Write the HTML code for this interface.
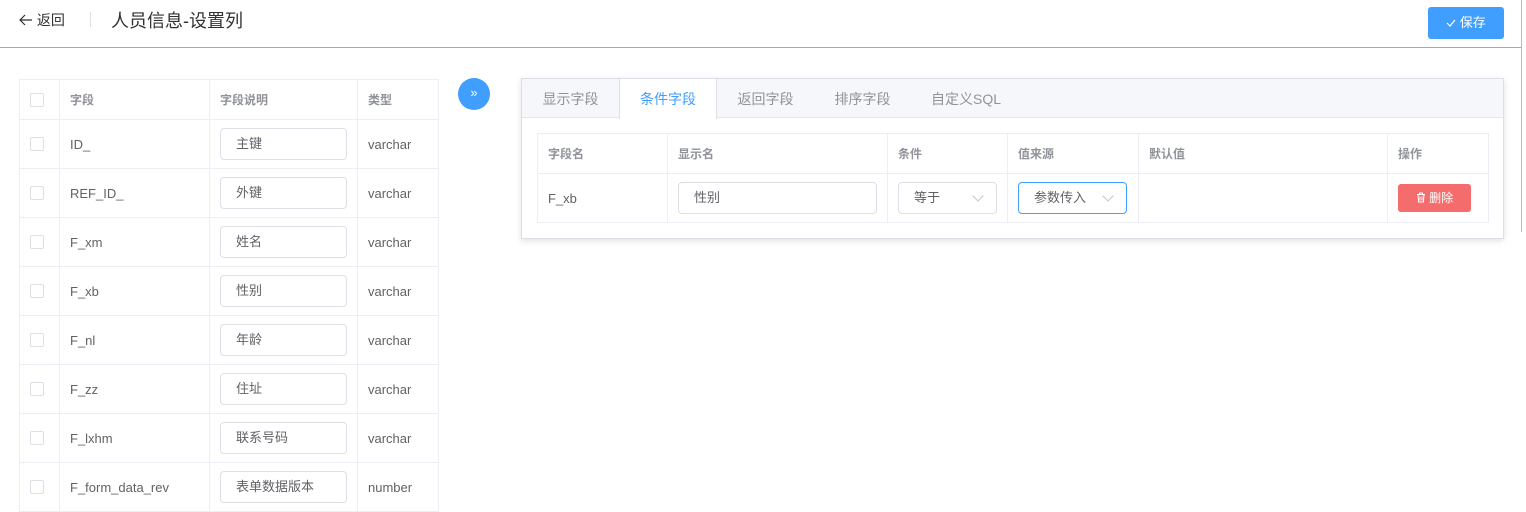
<!DOCTYPE html>
<html><head><meta charset="utf-8"><style>
*{box-sizing:border-box;margin:0;padding:0}
body{width:1526px;height:492px;overflow:hidden;background:#fff;font-family:"Liberation Sans","Noto Sans CJK SC",sans-serif;font-size:13px;color:#606266;position:relative}
.a{position:absolute}
.hdr{left:0;top:0;width:1522px;height:48px;border-bottom:1px solid #a8a8a8}
.vl{left:1521px;top:0;width:1px;height:232px;background:#bbb}
table{border-collapse:collapse;table-layout:fixed}
td{border:1px solid #ebeef5;padding:0 10px;vertical-align:middle}
.lt td{height:49px}
.lt tr:first-child td{height:40px;color:#909399;font-weight:bold;font-size:12px}
.cb{width:14px;height:14px;border:1px solid #dcdfe6;border-radius:2px;margin-left:0}
.inp{width:127px;height:32px;border:1px solid #dcdfe6;border-radius:4px;padding-left:15px;line-height:30px;color:#606266}
.panel{left:521px;top:78px;width:983px;height:161px;border:1px solid #dcdfe6;box-shadow:0 2px 6px rgba(0,0,0,.12);background:#fff}
.tabs{left:0;top:0;width:981px;height:39px;background:#f5f7fa;border-bottom:1px solid #e4e7ed}
.tab{position:absolute;top:0;height:39px;line-height:40px;text-align:center;font-size:14px;color:#909399}
.rt td{padding-left:10px}
.rt tr:first-child td{height:40px;color:#909399;font-weight:bold;font-size:12px}
.rt tr:last-child td{height:49px}
.sel{height:32px;border:1px solid #dcdfe6;border-radius:4px;padding-left:15px;line-height:30px;position:relative;color:#606266}
.sel:after{content:"";position:absolute;right:14px;top:9px;width:7px;height:7px;border-right:1px solid #c0c4cc;border-bottom:1px solid #c0c4cc;transform:rotate(45deg)}
</style></head><body>
<div class="a hdr"></div>
<div class="a vl"></div>
<div class="a" style="left:19px;top:10px;font-size:14px;color:#303133">
<svg width="14" height="12" viewBox="0 0 14 12" style="vertical-align:-1px"><path d="M6 1L1 6l5 5M1 6h12" fill="none" stroke="#303133" stroke-width="1.2"/></svg> 返回</div>
<div class="a" style="left:90px;top:12px;width:1px;height:15px;background:#dcdfe6"></div>
<div class="a" style="left:111px;top:7px;font-size:18px;color:#303133">人员信息-设置列</div>
<div class="a" style="left:1428px;top:7px;width:76px;height:32px;background:#409eff;border-radius:3px;color:#fff;font-size:13px;line-height:32px;text-align:center"><svg width="10" height="8" viewBox="0 0 10 8" style="vertical-align:0"><path d="M1 4l3 3 5-6" fill="none" stroke="#fff" stroke-width="1.2"/></svg> 保存</div>

<table class="a lt" style="left:19px;top:79px;width:419px">
<colgroup><col style="width:40px"><col style="width:150px"><col style="width:148px"><col style="width:81px"></colgroup>
<tr><td><div class="cb"></div></td><td>字段</td><td>字段说明</td><td>类型</td></tr>
<tr><td><div class="cb"></div></td><td>ID_</td><td><div class="inp">主键</div></td><td>varchar</td></tr>
<tr><td><div class="cb"></div></td><td>REF_ID_</td><td><div class="inp">外键</div></td><td>varchar</td></tr>
<tr><td><div class="cb"></div></td><td>F_xm</td><td><div class="inp">姓名</div></td><td>varchar</td></tr>
<tr><td><div class="cb"></div></td><td>F_xb</td><td><div class="inp">性别</div></td><td>varchar</td></tr>
<tr><td><div class="cb"></div></td><td>F_nl</td><td><div class="inp">年龄</div></td><td>varchar</td></tr>
<tr><td><div class="cb"></div></td><td>F_zz</td><td><div class="inp">住址</div></td><td>varchar</td></tr>
<tr><td><div class="cb"></div></td><td>F_lxhm</td><td><div class="inp">联系号码</div></td><td>varchar</td></tr>
<tr><td><div class="cb"></div></td><td>F_form_data_rev</td><td><div class="inp">表单数据版本</div></td><td>number</td></tr>
</table>

<div class="a" style="left:458px;top:78px;width:32px;height:32px;border-radius:50%;background:#409eff;color:#fff;text-align:center;line-height:30px;font-size:13px">»</div>

<div class="a panel">
<div class="a tabs"></div>
<div class="tab" style="left:0;width:97px">显示字段</div>
<div class="tab" style="left:97px;width:98px;background:#fff;color:#409eff;border-left:1px solid #dcdfe6;border-right:1px solid #dcdfe6;height:40px">条件字段</div>
<div class="tab" style="left:195px;width:97px">返回字段</div>
<div class="tab" style="left:292px;width:97px">排序字段</div>
<div class="tab" style="left:389px;width:110px">自定义SQL</div>
<table class="a rt" style="left:15px;top:54px;width:951px">
<colgroup><col style="width:130px"><col style="width:220px"><col style="width:120px"><col style="width:131px"><col style="width:249px"><col style="width:101px"></colgroup>
<tr><td>字段名</td><td>显示名</td><td>条件</td><td>值来源</td><td>默认值</td><td>操作</td></tr>
<tr><td>F_xb</td><td><div class="inp" style="width:199px">性别</div></td><td><div class="sel" style="width:99px">等于</div></td><td><div class="sel" style="width:109px;border-color:#409eff">参数传入</div></td><td></td><td><div style="width:73px;height:28px;background:#f56c6c;border-radius:3px;color:#fff;font-size:12px;line-height:28px;text-align:center"><svg width="10" height="11" viewBox="0 0 10 11" style="vertical-align:-1px"><path d="M1 2.5h8M3.5 2.5V1h3v1.5M2 2.5l.6 7.5h4.8L8 2.5M4 4.5v4M6 4.5v4" fill="none" stroke="#fff" stroke-width="1"/></svg> 删除</div></td></tr>
</table>
</div>
</body></html>
